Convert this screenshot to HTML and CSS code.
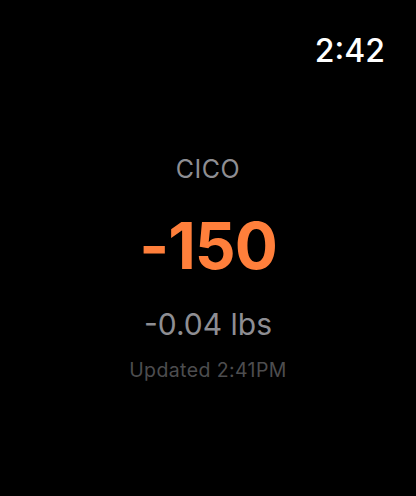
FILE: index.html
```html
<!DOCTYPE html>
<html>
<head>
<meta charset="utf-8">
<link rel="stylesheet" href="styles.css">
</head>
<body>
<div class="screen">
  <header class="status">
    <span class="clock">2:42</span>
  </header>
  <main class="content">
    <div class="label">CICO</div>
    <div class="value">-150</div>
    <div class="weight">-0.04 lbs</div>
    <div class="updated">Updated 2:41PM</div>
  </main>
</div>
</body>
</html>
```
FILE: styles.css
```css
html, body {
  margin: 0;
  padding: 0;
  background: #000;
}
.screen {
  width: 416px;
  height: 496px;
  display: flex;
  flex-direction: column;
  font-family: Inter, "Noto Sans", sans-serif;
}
.status {
  display: flex;
  justify-content: flex-end;
  padding: 31px 31px 0 0;
}
.clock {
  color: #fff;
  font-size: 32px;
  font-weight: 500;
  line-height: 40px;
}
.content {
  display: flex;
  flex-direction: column;
  align-items: center;
  padding-top: 83px;
}
.label {
  color: #8e8e93;
  font-size: 25px;
  line-height: 30px;
  letter-spacing: 0.5px;
}
.value {
  color: #ff7f3b;
  font-size: 64px;
  font-weight: 700;
  line-height: 76px;
  margin-top: 24px;
  letter-spacing: -1px;
}
.weight {
  color: #8e8e93;
  font-size: 30px;
  line-height: 36px;
  margin-top: 22px;
}
.updated {
  color: #4d4d4f;
  font-size: 19.5px;
  line-height: 24px;
  margin-top: 16px;
  letter-spacing: 0.4px;
}
```
